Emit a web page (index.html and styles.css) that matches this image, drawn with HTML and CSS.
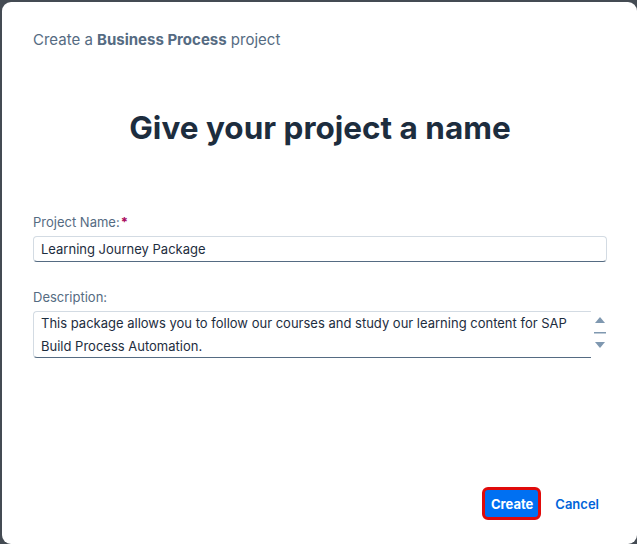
FILE: index.html
```html
<!DOCTYPE html>
<html>
<head>
<meta charset="utf-8">
<link rel="stylesheet" href="styles.css">
</head>
<body>
<div class="dialog">
  <div class="subtitle">Create a <b>Business Process</b> project</div>
  <h1 class="title">Give your project a name</h1>
  <div class="field">
    <label class="label">Project Name:<span class="req">*</span></label>
    <div class="input">Learning Journey Package</div>
  </div>
  <div class="field desc">
    <label class="label">Description:</label>
    <div class="textarea-row">
      <div class="textarea">This package allows you to follow our courses and study our learning content for SAP Build Process Automation.</div>
      <div class="scroll">
        <svg width="12" height="40" viewBox="0 0 12 40">
          <path d="M6 3 L11 9 L1 9 Z" fill="#7f98b0"/>
          <rect x="0" y="18" width="12" height="1.5" fill="#7f98b0"/>
          <path d="M1 28 L11 28 L6 34 Z" fill="#7f98b0"/>
        </svg>
      </div>
    </div>
  </div>
  <div class="footer">
    <button class="btn-create">Create</button>
    <button class="btn-cancel">Cancel</button>
  </div>
</div>
</body>
</html>
```
FILE: styles.css
```css
html, body {
  margin: 0;
  padding: 0;
  height: 100%;
  background: #444b53;
  overflow: hidden;
}
body {
  font-family: Inter, "Noto Sans", sans-serif;
}
.dialog {
  margin: 2px 0 0 2px;
  height: 542px;
  width: 635px;
  background: #fff;
  border-radius: 9px;
  box-sizing: border-box;
  padding: 29px 30px 0 31px;
  display: flex;
  flex-direction: column;
}
.subtitle {
  font-size: 15px;
  color: #556b82;
  line-height: 18px;
}
.subtitle b {
  font-weight: 700;
}
.title {
  margin: 60px 0 0 0;
  text-align: center;
  font-size: 31.5px;
  font-weight: 700;
  color: #1d2d3e;
  line-height: 38px;
}
.field {
  margin-top: 67px;
  display: flex;
  flex-direction: column;
}
.field.desc {
  margin-top: 27px;
}
.label {
  font-size: 13px;
  color: #556b82;
  line-height: 16px;
  margin-bottom: 6px;
}
.req {
  color: #aa0a5e;
  font-weight: 700;
  margin-left: 1px;
}
.input {
  height: 26px;
  box-sizing: border-box;
  border: 1px solid #d3dbe3;
  border-bottom: 1px solid #556b82;
  border-radius: 4px;
  font-size: 13px;
  color: #1d2d3e;
  padding: 0 8px 0 7px;
  line-height: 24px;
  width: 574px;
}
.textarea-row {
  display: flex;
  align-items: flex-start;
}
.textarea {
  width: 559px;
  height: 47px;
  box-sizing: border-box;
  border: 1px solid #d3dbe3;
  border-right: none;
  border-bottom: 1px solid #556b82;
  border-radius: 4px 0 0 4px;
  font-size: 13px;
  color: #1d2d3e;
  padding: 0 8px 0 7px;
  line-height: 23px;
}
.scroll {
  margin-left: 0;
  padding: 3px 0 0 1px;
  width: 15px;
  display: flex;
  justify-content: center;
}
.footer {
  margin-top: auto;
  margin-bottom: 24px;
  display: flex;
  justify-content: flex-end;
  align-items: center;
  gap: 10px;
  padding-right: 4px;
}
.btn-create {
  font-family: inherit;
  font-size: 13px;
  font-weight: 700;
  color: #fff;
  background: #0070f2;
  border: 3px solid #e00b0b;
  border-radius: 6px;
  height: 33px;
  padding: 0 5px 0 6px;
  box-shadow: inset 0 0 0 1px #0070f2;
}
.btn-cancel {
  font-family: inherit;
  font-size: 13px;
  font-weight: 600;
  color: #0064d9;
  background: none;
  border: none;
  padding: 0 4px;
  height: 33px;
}
```
